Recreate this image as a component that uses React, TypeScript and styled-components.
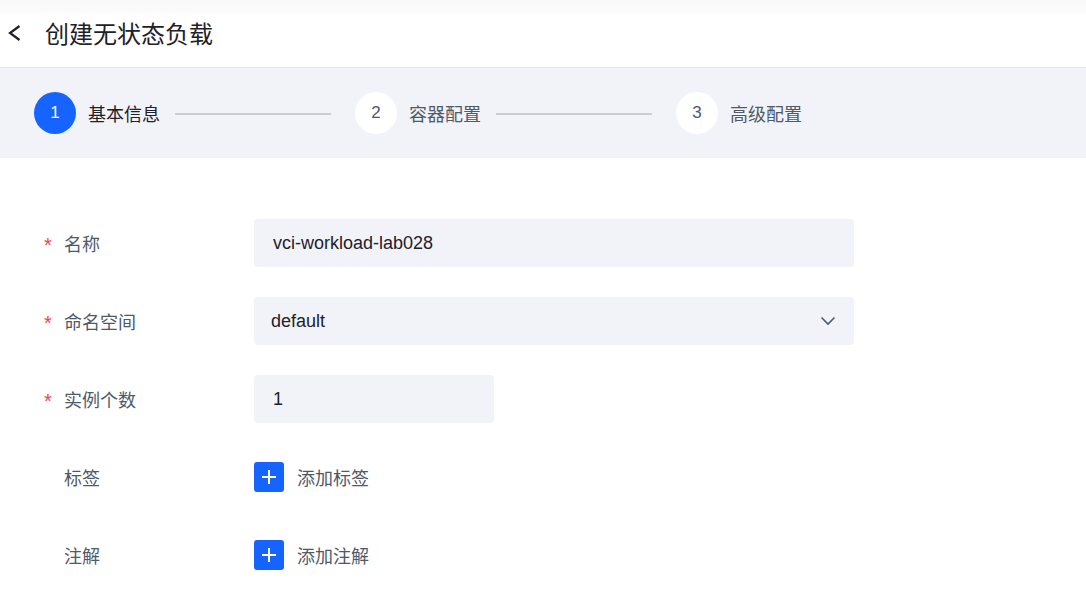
import React from "react";
import styled, { createGlobalStyle } from "styled-components";

const GlobalStyle = createGlobalStyle`
  html, body { margin: 0; padding: 0; background: #ffffff; }
  body { font-family: "Noto Sans CJK SC", "Liberation Sans", Arial, sans-serif; }
  * { box-sizing: border-box; }
`;

const Page = styled.div`
  width: 1086px;
  height: 606px;
  overflow: hidden;
  display: flex;
  flex-direction: column;
  background: #ffffff;
`;

const Header = styled.header`
  height: 68px;
  flex: none;
  display: flex;
  align-items: center;
  padding: 0 0 1px 7px;
  gap: 21px;
  background: linear-gradient(to bottom, #f8f8f9 0px, #fbfbfc 12px, #ffffff 16px);
  border-bottom: 1px solid #e5e6eb;
`;

const BackButton = styled.button`
  width: 17px;
  height: 24px;
  padding: 0;
  border: none;
  background: transparent;
  display: flex;
  align-items: center;
  justify-content: flex-start;
  color: #1d2129;
  cursor: pointer;
`;

const Title = styled.h1`
  margin: 0;
  font-size: 24px;
  font-weight: 400;
  line-height: 32px;
  color: #1d2129;
  font-family: "Noto Sans CJK SC", sans-serif;
`;

const StepsBar = styled.div`
  height: 90px;
  flex: none;
  background: #f2f3f8;
  display: flex;
  align-items: center;
  padding: 0 0 0 34px;
`;

const Step = styled.div`
  display: flex;
  align-items: center;
`;

const StepCircle = styled.div<{ $active?: boolean }>`
  width: 42px;
  height: 42px;
  border-radius: 50%;
  background: ${(p) => (p.$active ? "#1664ff" : "#ffffff")};
  color: ${(p) => (p.$active ? "#ffffff" : "#4e5969")};
  display: flex;
  align-items: center;
  justify-content: center;
  font-family: "Liberation Sans", Arial, sans-serif;
  font-size: 17px;
`;

const StepLabel = styled.span<{ $active?: boolean }>`
  margin-left: 12px;
  font-size: 18px;
  line-height: 26px;
  color: ${(p) => (p.$active ? "#1d2129" : "#4e5969")};
`;

const StepLine = styled.div`
  width: 156px;
  height: 2px;
  background: #c9cdd4;
  margin: 2px 24px 0 15px;
`;

const Form = styled.div`
  display: flex;
  flex-direction: column;
  gap: 30px;
  padding: 61px 0 0 44px;
`;

const Row = styled.div`
  display: flex;
  align-items: center;
  height: 48px;
`;

const Label = styled.div`
  width: 210px;
  display: flex;
  align-items: center;
  font-size: 18px;
  color: #4e5969;
`;

const Required = styled.span<{ $hidden?: boolean }>`
  width: 20px;
  color: #f53f3f;
  font-family: "Liberation Sans", Arial, sans-serif;
  font-size: 20px;
  visibility: ${(p) => (p.$hidden ? "hidden" : "visible")};
  padding-top: 5px;
`;

const InputBox = styled.div<{ $width: number }>`
  width: ${(p) => p.$width}px;
  height: 48px;
  background: #f2f3f8;
  border-radius: 4px;
  display: flex;
  align-items: center;
  justify-content: space-between;
  padding: 0 18px 0 19px;
  font-family: "Liberation Sans", Arial, sans-serif;
  font-size: 18px;
  color: #1d2129;
`;

const SelectText = styled.span`
  margin-left: -2px;
`;

const AddRow = styled.div`
  display: flex;
  align-items: center;
  gap: 13px;
`;

const PlusButton = styled.button`
  width: 30px;
  height: 30px;
  border: none;
  border-radius: 3px;
  background: #1664ff;
  padding: 0;
  display: flex;
  align-items: center;
  justify-content: center;
`;

const AddText = styled.span`
  font-size: 18px;
  color: #4e5969;
`;

const Plus = () => (
  <svg width="16" height="16" viewBox="0 0 16 16">
    <path d="M8 1v14M1 8h14" stroke="#ffffff" strokeWidth="2" fill="none" />
  </svg>
);

const steps = [
  { n: 1, label: "基本信息", active: true },
  { n: 2, label: "容器配置", active: false },
  { n: 3, label: "高级配置", active: false },
];

export default function App() {
  return (
    <>
      <GlobalStyle />
      <Page>
        <Header>
          <BackButton aria-label="back">
            <svg width="17" height="18" viewBox="0 0 17 18">
              <path d="M12.5 2L3 9l9.5 7" stroke="#1d2129" strokeWidth="2.2" fill="none" />
            </svg>
          </BackButton>
          <Title>创建无状态负载</Title>
        </Header>
        <StepsBar>
          {steps.map((s, i) => (
            <Step key={s.n}>
              <StepCircle $active={s.active}>{s.n}</StepCircle>
              <StepLabel $active={s.active}>{s.label}</StepLabel>
              {i < steps.length - 1 && <StepLine />}
            </Step>
          ))}
        </StepsBar>
        <Form>
          <Row>
            <Label>
              <Required>*</Required>名称
            </Label>
            <InputBox $width={600}>vci-workload-lab028</InputBox>
          </Row>
          <Row>
            <Label>
              <Required>*</Required>命名空间
            </Label>
            <InputBox $width={600}>
              <SelectText>default</SelectText>
              <svg width="16" height="10" viewBox="0 0 16 10">
                <path d="M1.5 1.5L8 8l6.5-6.5" stroke="#4e5969" strokeWidth="1.6" fill="none" />
              </svg>
            </InputBox>
          </Row>
          <Row>
            <Label>
              <Required>*</Required>实例个数
            </Label>
            <InputBox $width={240}>1</InputBox>
          </Row>
          <Row>
            <Label>
              <Required $hidden>*</Required>标签
            </Label>
            <AddRow>
              <PlusButton aria-label="add label">
                <Plus />
              </PlusButton>
              <AddText>添加标签</AddText>
            </AddRow>
          </Row>
          <Row>
            <Label>
              <Required $hidden>*</Required>注解
            </Label>
            <AddRow>
              <PlusButton aria-label="add annotation">
                <Plus />
              </PlusButton>
              <AddText>添加注解</AddText>
            </AddRow>
          </Row>
        </Form>
      </Page>
    </>
  );
}
